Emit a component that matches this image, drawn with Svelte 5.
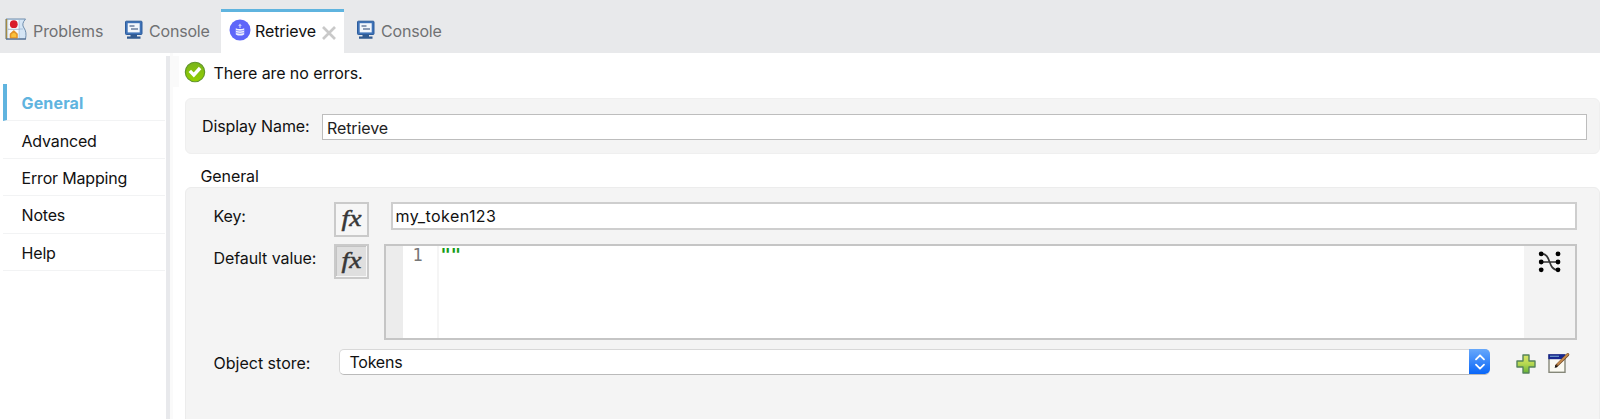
<script>
  const nav = ['General', 'Advanced', 'Error Mapping', 'Notes', 'Help'];
  let active = $state('General');
  let displayName = $state('Retrieve');
  let key = $state('my_token123');
</script>

{#snippet consoleIcon()}
  <svg class="monitor" width="20" height="20" viewBox="0 0 20 20">
    <rect x="1.5" y="1.2" width="16.5" height="13.3" rx=".8" fill="#3f73b8" stroke="#2d5d9c" />
    <rect x="3.7" y="3.2" width="12" height="9.2" fill="#f3f7fc" />
    <path d="M5.5 6h5M7 9h7" stroke="#26436f" stroke-width="1.2" />
    <path d="M6.5 14.5h6.5v2h3.5v2.3H3v-2.3h3.5z" fill="#315b91" />
  </svg>
{/snippet}

{#snippet fx(pressed)}
  <button class="fx" class:pressed aria-label="Expression">
    <span>fx</span>
  </button>
{/snippet}

<div class="app">
  <header>
    <div class="tab problems">
      <svg width="22" height="22" viewBox="0 0 22 22">
        <path d="M1 1h19.5q-4.5 5-1.5 9t1.5 11H1z" fill="#d5e5f5" stroke="#6f8dad" />
        <path d="M1.5 1v20" stroke="#a38a45" stroke-width="1.5" />
        <path d="M3 11h15M14 2v18" stroke="#a9c2dc" />
        <rect x="3.5" y="2" width="10" height="18.5" fill="#f8fafc" />
        <path d="M3 11.3h12" stroke="#a9bbce" />
        <circle cx="8.8" cy="6.2" r="3.9" fill="#d91c2b" />
        <path d="M8.8 13.2 12 16.2V20H5.5v-3.8z" fill="#fbc13b" stroke="#e39428" stroke-width="1.6" stroke-linejoin="round" />
        <path d="M1 21h20" stroke="#566f94" stroke-width="1.2" />
      </svg>
      <span>Problems</span>
    </div>
    <div class="tab console">{@render consoleIcon()}<span>Console</span></div>
    <div class="tab current">
      <svg width="22" height="22" viewBox="0 0 22 22">
        <circle cx="11" cy="11" r="10.5" fill="#5e66f9" />
        <path d="M11 4.6 12.8 7h-1.2v2h-1.2V7H9.2z" fill="#c9cdff" />
        <path d="M6.8 9.2q4.2 1.8 8.4 0v6.2q-4.2 2.4-8.4 0z" fill="#eef0ff" />
        <path d="M6.8 11.3q4.2 1.7 8.4 0M6.8 13.6q4.2 1.7 8.4 0" fill="none" stroke="#7c83fb" stroke-width=".8" />
      </svg>
      <span>Retrieve</span>
      <svg class="close" width="14" height="14" viewBox="0 0 14 14"><path d="M1 1l12 12M13 1 1 13" stroke="#c9c9c9" stroke-width="2.7" /></svg>
    </div>
    <div class="tab console second">{@render consoleIcon()}<span>Console</span></div>
  </header>

  <div class="body">
    <nav>
      {#each nav as item}
        <button class:active={active === item} onclick={() => (active = item)}><span>{item}</span></button>
      {/each}
    </nav>
    <div class="divider"></div>
    <div class="margin"><div></div></div>

    <main>
      <div class="status">
        <svg width="22" height="22" viewBox="0 0 22 22">
          <defs>
            <linearGradient id="ok" x1="0" y1="0" x2="0" y2="1"><stop offset="0" stop-color="#79b41b" /><stop offset="1" stop-color="#93d000" /></linearGradient>
          </defs>
          <circle cx="11" cy="11" r="9.7" fill="url(#ok)" stroke="#5f9427" stroke-width="1.1" />
          <path d="M5.8 9.8l4 4.2 6.3-7" fill="none" stroke="#fff" stroke-width="3.4" />
        </svg>
        <span>There are no errors.</span>
      </div>

      <section class="name-panel">
        <label for="display">Display Name:</label>
        <input id="display" bind:value={displayName} />
      </section>

      <h2>General</h2>

      <section class="general-panel">
        <div class="row key-row">
          <label for="key">Key:</label>
          {@render fx(false)}
          <input id="key" bind:value={key} />
        </div>
        <div class="row value-row">
          <span class="label default">Default value:</span>
          {@render fx(true)}
          <div class="editor">
            <div class="ruler"></div>
            <div class="lines">1</div>
            <div class="code">""</div>
            <div class="side">
              <svg width="24" height="24" viewBox="0 0 24 24">
                <path d="M3 4c11-1 6 16 17 16M3 12h17" fill="none" stroke="#333" stroke-width="1.7" />
                <g fill="#000"><circle cx="3.2" cy="3.8" r="2.4" /><circle cx="3.2" cy="12" r="2.4" /><circle cx="3.2" cy="19.8" r="2.4" /><circle cx="20" cy="3.8" r="2.4" /><circle cx="20" cy="12" r="2.4" /><circle cx="20" cy="19.8" r="2.4" /></g>
              </svg>
            </div>
          </div>
        </div>
        <div class="row store-row">
          <span class="label store">Object store:</span>
          <div class="select">
            <span>Tokens</span>
            <div class="stepper">
              <svg width="12" height="18" viewBox="0 0 12 18"><path d="M2 6.3 6 2.3l4 4M2 11.7l4 4 4-4" fill="none" stroke="#fff" stroke-width="1.8" stroke-linecap="round" stroke-linejoin="round" /></svg>
            </div>
          </div>
          <svg class="add" width="20" height="20" viewBox="0 0 20 20">
            <defs><linearGradient id="plus" x1="0" y1="0" x2="0" y2="1"><stop offset="0" stop-color="#d9e667" /><stop offset=".5" stop-color="#b5d851" /><stop offset="1" stop-color="#63b236" /></linearGradient></defs>
            <path d="M7 1h6v6h6v6h-6v6H7v-6H1V7h6z" fill="url(#plus)" stroke="#55835a" stroke-width="1.4" stroke-linejoin="round" />
          </svg>
          <svg class="edit" width="24" height="22" viewBox="0 0 24 22">
            <rect x="2" y="3" width="16" height="17.3" fill="#fbfaf2" stroke="#858779" stroke-width="1.4" />
            <rect x="1.3" y="2.2" width="17" height="5" fill="#17278f" />
            <path d="M3 4.3h9" stroke="#6f9bcb" stroke-width="1.2" />
            <path d="M9.5 13.8 20.8 2.6" stroke="#704a27" stroke-width="3" stroke-linecap="round" />
            <path d="M11 12 20.8 2.4" stroke="#c78b4c" stroke-width="1.8" stroke-linecap="round" />
            <path d="m7.6 15.9 1-3 2 1.8z" fill="#111" />
          </svg>
        </div>
      </section>
    </main>
  </div>
</div>

<style>
  :global(body) { margin: 0; }
  .app { width: 1600px; height: 419px; overflow: hidden; background: #fff; color: #111; font: 16px/20px Inter, "Liberation Sans", sans-serif; letter-spacing: -.09px; }
  .app * { box-sizing: border-box; }
  svg { display: block; flex: none; }
  button { font: inherit; color: inherit; letter-spacing: inherit; border: 0; padding: 0; background: none; }
  span, label, h2 { white-space: nowrap; }
  header { height: 53px; background: #e8e9eb; display: flex; }
  .tab { display: flex; align-items: flex-start; color: #707173; }
  .tab > span { margin-top: 21px; }
  .problems { width: 124px; padding-left: 5px; }
  .problems > svg { margin-top: 18px; }
  .problems > span { margin-left: 6px; }
  .console { width: 97px; letter-spacing: -.2px; }
  .monitor { margin-top: 19.5px; }
  .console > span { margin-left: 5px; }
  .current { width: 123px; background: #fff; border-top: 3px solid #5fb4df; margin-top: 9px; padding-left: 7.5px; color: #111; }
  .current > svg { margin-top: 7px; }
  .current > span { margin-top: 9px; margin-left: 4.5px; }
  .current > .close { margin-top: 13.5px; margin-left: 6px; }
  .second { margin-left: 12px; }
  .body { display: flex; height: 366px; }
  nav { width: 166px; padding: 31px 1px 0 3px; display: flex; flex-direction: column; letter-spacing: -.17px; }
  nav button { height: 37.4px; flex: none; text-align: left; border-bottom: 1px solid #f2f3f4; padding: 2px 0 0 18.5px; }
  nav button.active { border-left: 4px solid #60b4df; padding: 2px 0 0 14.5px; color: #60b4df; font-weight: 700; letter-spacing: .15px; }
  .divider { width: 4px; margin-top: 3px; background: #e8e9ec; }
  .margin { width: 15px; padding: 3px 0 0 1px; background: linear-gradient(90deg, #fafafa 3px, #fff 3px); }
  .margin > div { width: 8px; height: 31px; background: #fafafa; }
  main { width: 1415px; }
  .status { height: 45px; padding-top: 8px; display: flex; margin-left: -1px; }
  .status > span { margin: 2px 0 0 7.5px; }
  .name-panel { height: 56px; background: #f4f4f4; border: 1px solid #efefef; border-radius: 6px; display: flex; padding: 15px 12.5px 0 16px; }
  .name-panel label { width: 120px; padding-top: 2px; }
  input { font: inherit; letter-spacing: inherit; color: #222; background: #fff; border: 2px solid #cecece; border-radius: 0; outline: 0; min-width: 0; flex: 1; padding: 0 0 0 3px; }
  .name-panel input { height: 26px; border-width: 1px; border-color: #bdbdbd; padding: 1px 0 0 4px; }
  h2 { font: inherit; margin: 0; height: 33px; padding: 12px 0 0 15.5px; }
  .general-panel { height: 240px; background: #f4f4f4; border: 1px solid #ececec; border-radius: 6px; padding: 14px 22px 0 27.5px; }
  .row { display: flex; align-items: flex-start; }
  .row > label, .label { width: 120px; flex: none; }
  .key-row { height: 42px; }
  .key-row label { padding-top: 4px; }
  .fx { width: 35px; height: 35px; border: 2px solid #cacaca; background: #f6f6f6; flex: none; font: italic 24px/28px "Liberation Serif", serif; -webkit-text-stroke: .5px #383838; letter-spacing: 0; }
  .fx span { display: block; transform: translateY(-2px) scaleX(1.15); color: #383838; }
  .fx.pressed { background: #dfdfdf; box-shadow: inset -1px -1px #f7f7f7, inset 1px 1px #c3c3c3; }
  .key-row input { height: 28px; margin-left: 22px; color: #111; letter-spacing: .42px; }
  .value-row { height: 105px; }
  .default { padding-top: 4px; letter-spacing: -.08px; }
  .editor { flex: 1; height: 96px; margin-left: 15px; border: 2px solid #c5c5c5; background: #fff; display: flex; font: 17px/20px "DejaVu Sans Mono", monospace; letter-spacing: 0; }
  .ruler { width: 17px; background: #ececec; }
  .lines { width: 36px; border-right: 2px solid #f5f5f5; padding-left: 10px; line-height: 18px; color: #777; }
  .code { flex: 1; color: #149b14; padding-left: 2px; font-weight: 700; line-height: 19px; letter-spacing: -.1px; }
  .side { width: 51px; background: #f3f3f3; padding: 4px 0 0 14px; }
  .store { width: 125px; padding-top: 4px; letter-spacing: 0; }
  .select { width: 1151.5px; height: 25.5px; background: #fff; border: 1px solid #d8d8d8; border-bottom-color: #bababa; border-radius: 5px; display: flex; justify-content: space-between; padding-left: 10px; }
  .select > span { padding-top: 1.5px; letter-spacing: -.25px; }
  .stepper { width: 21px; height: 25px; margin: -1px -1px 0 0; border-radius: 0 5px 5px 0; background: linear-gradient(#67a8fb, #0966f8); display: grid; place-items: center; }
  .add { margin: 4.5px 0 0 25.5px; }
  .edit { margin: 3px 0 0 11.5px; }
</style>
